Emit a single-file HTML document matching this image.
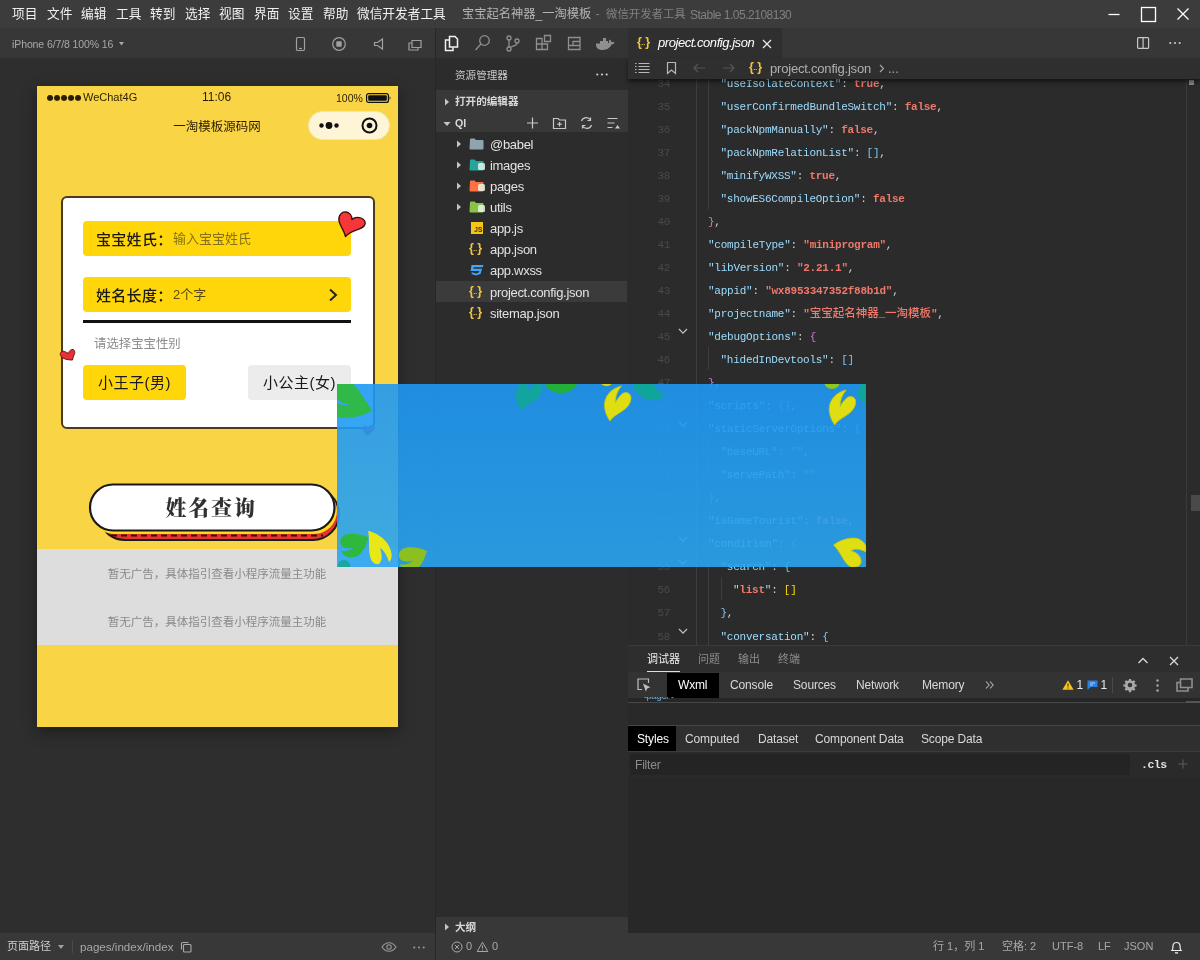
<!DOCTYPE html>
<html lang="zh-CN">
<head>
<meta charset="utf-8">
<title>微信开发者工具</title>
<style>
*{box-sizing:border-box;margin:0;padding:0}
html,body{width:1200px;height:960px;overflow:hidden;background:#2e2e2e}
body{position:relative;font-family:"Liberation Sans","Noto Sans CJK SC",sans-serif;font-size:12px;color:#ccc}
.abs{position:absolute}
.t{position:absolute;white-space:nowrap;line-height:1}
svg{position:absolute;overflow:visible}
/* title bar */
#titlebar{left:0;top:0;width:1200px;height:28px;background:#3c3c3c}
#titlebar .m{color:#f0f0f0;font-size:12.7px;top:8px}
#titlebar .ttl{color:#9d9d9d;font-size:12.5px;top:8px}
/* simulator */
#simbar{left:0;top:28px;width:436px;height:30px;background:#373737}
#sim{left:0;top:58px;width:436px;height:875px;background:#2e2e2e}
#vsplit{left:435px;top:28px;width:1px;height:932px;background:#272727}
/* phone */
#phone{left:37px;top:86px;width:361px;height:641px;background:#f9d444;box-shadow:0 5px 14px rgba(0,0,0,.38);overflow:hidden;color:#000}

/* phone internals (coords relative to phone: x-37, y-86) */
#phone .st{font-size:11px;color:#2a1e00;top:6px}
#capsule{left:271px;top:25px;width:82px;height:29px;border-radius:15px;background:#fdf5d6;border:1px solid #f3e6b0}
#card{left:24px;top:110px;width:314px;height:233px;background:#fff;border:2px solid #4b3a1c;border-radius:6px}
.row{position:absolute;left:46px;width:268px;height:35px;border-radius:4px;background:#ffd60a}
.row .lb{left:13px;top:10.800px;font-size:15px;color:#1a1a1a;font-weight:500;letter-spacing:.3px}
.row .ph{left:90px;top:11px;font-size:13px;color:#86711a}
.gbtn{position:absolute;top:279px;width:103px;height:35px;border-radius:4px;font-size:15px;color:#1a1a1a;text-align:center;line-height:35px;letter-spacing:.5px}
#adbox{left:0;top:463px;width:361px;height:96px;background:#dddddd}
#adbox .t{font-size:11.500px;color:#8a8a8a;left:0;width:360px;text-align:center}
/* explorer */
#actbar{left:436px;top:28px;width:192px;height:30px;background:#343434}
#explorer{left:436px;top:58px;width:192px;height:875px;background:#2c2c2c}
.tree{font-size:13px;color:#e2e2e2;letter-spacing:-.3px;margin-top:1px}
.hdr{font-size:10.600px;font-weight:bold;color:#d8d8d8}
/* editor */
#tabstrip{left:628px;top:28px;width:572px;height:30px;background:#373737}
#tab{left:628px;top:28px;width:154px;height:30px;background:#2f2f2f}
#crumbs{left:628px;top:58px;width:572px;height:21px;background:#2f2f2f;box-shadow:0 3px 4px rgba(0,0,0,.5)}
#editor{left:628px;top:58px;width:572px;height:587px;background:#2b2b2b;overflow:hidden}
.ln{position:absolute;left:0;width:42px;text-align:right;color:#494949;font-family:"Liberation Mono",monospace;font-size:11px;letter-spacing:-.3px;line-height:23px;height:23px}
.cl{position:absolute;white-space:pre;font-family:"Liberation Mono",monospace;font-size:11px;letter-spacing:-.25px;line-height:23px;height:23px;color:#d4d4d4}
.cj{font-family:"Noto Sans CJK SC",sans-serif;font-size:11.500px;letter-spacing:0;font-weight:500;line-height:0}.k{color:#9cdcfe}.s{color:#f0796b;font-weight:bold}.p{color:#d4d4d4}.b1{color:#ffd700}.b2{color:#da70d6}.b3{color:#7cc4f5}
/* debug panel */
#dbg{left:628px;top:645px;width:572px;height:288px;background:#252525}
.dt{font-size:12px;color:#d8d8d8;top:34px;letter-spacing:-.15px}
/* status */
#status .t{font-size:11px;color:#a8a8a8;top:8px}
#status{left:0;top:933px;width:1200px;height:27px;background:#383838}
</style>
</head>
<body><div id="root" style="position:absolute;left:0;top:0;width:1200px;height:960px;will-change:transform">
<div id="titlebar" class="abs"><span class="t m" style="left:12px">项目</span><span class="t m" style="left:47px">文件</span><span class="t m" style="left:81px">编辑</span><span class="t m" style="left:116px">工具</span><span class="t m" style="left:150px">转到</span><span class="t m" style="left:185px">选择</span><span class="t m" style="left:219px">视图</span><span class="t m" style="left:254px">界面</span><span class="t m" style="left:288px">设置</span><span class="t m" style="left:323px">帮助</span><span class="t m" style="left:357px">微信开发者工具</span><span class="t ttl" style="left:462px;font-size:12.25px;color:#b4b4b4" id="tt1">宝宝起名神器_一淘模板</span><span class="t ttl" style="left:595.5px;color:#808080" id="tt2">-</span><span class="t ttl" style="left:606px;color:#808080;font-size:11.4px;top:9px" id="tt3">微信开发者工具</span><span class="t ttl" style="left:690px;color:#808080;font-size:12px;letter-spacing:-.5px;top:8.5px" id="tt4">Stable 1.05.2108130</span><svg style="left:1100px;top:0" width="100" height="28" viewBox="0 0 100 28" fill="none" stroke="#fff" stroke-width="1.3">
<path d="M8.500 14.500h11"/><rect x="41.5" y="7.5" width="14" height="14"/><path d="M77.500 8.500l11 11M88.500 8.500l-11 11"/></svg></div>
<div id="simbar" class="abs"><span class="t" style="left:12px;top:10.800px;font-size:10.500px;letter-spacing:-.1px;color:#a8a8a8">iPhone 6/7/8 100% 16</span>
<svg style="left:118.500px;top:14px" width="5" height="3.500" viewBox="0 0 6 4"><path d="M0 0h6L3 4z" fill="#a8a8a8"/></svg>
<svg style="left:290px;top:7.200px" width="140" height="18" viewBox="0 0 140 18" fill="none" stroke="#a0a0a0" stroke-width="1.2">
<rect x="6.5" y="2.5" width="8" height="13" rx="1.2"/><path d="M9 13.5h3"/>
<circle cx="49" cy="9" r="6.3"/><rect x="46.3" y="6.3" width="5.4" height="5.4" rx="1" fill="#a0a0a0" stroke="none"/>
<path d="M83 7.5h3l5-3.5v10l-5-3.5h-3z" transform="translate(1.5,0)"/>
<path d="M122 5.5h9v7h-9z"/><path d="M122 8h-3v7h9v-2.5"/>
</svg></div>
<div id="sim" class="abs"></div>
<div id="phone" class="abs">
<span class="t st" id="dots" style="left:9.700px;letter-spacing:.05px;font-size:8px;top:7.600px;font-family:'DejaVu Sans',sans-serif">●●●●●</span><span class="t st" style="left:46px">WeChat4G</span>
<span class="t st" style="left:165px;font-size:12px;top:5px">11:06</span>
<span class="t st" style="left:299px;font-size:10.5px;top:7px">100%</span>
<svg style="left:329px;top:7px" width="26" height="10" viewBox="0 0 26 10"><rect x=".6" y=".6" width="21.8" height="8.8" rx="2" fill="none" stroke="#111" stroke-width="1.2"/><rect x="2.2" y="2.2" width="18.6" height="5.6" rx="1" fill="#111"/><path d="M23.6 3.2v3.6c1.2-.3 1.2-3.3 0-3.6z" fill="#111"/></svg>
<span class="t" style="left:0;width:360px;text-align:center;top:35.200px;font-size:12.500px;color:#2a1e00">一淘模板源码网</span>
<div id="capsule" class="abs"><svg style="left:0;top:0" width="80" height="27" viewBox="0 0 80 27"><circle cx="12.500" cy="13.500" r="2.200" fill="#111"/><circle cx="20" cy="13.500" r="3.400" fill="#111"/><circle cx="27.500" cy="13.500" r="2.200" fill="#111"/><circle cx="60.5" cy="13.5" r="7" fill="none" stroke="#111" stroke-width="2"/><circle cx="60.5" cy="13.5" r="2.8" fill="#111"/></svg></div>
<div id="card" class="abs"></div>
<div class="row" style="top:135px"><span class="t lb">宝宝姓氏：</span><span class="t ph">输入宝宝姓氏</span></div>
<div class="row" style="top:191px"><span class="t lb">姓名长度：</span><span class="t ph" style="color:#5a4a10">2个字</span>
<svg style="left:245px;top:11px" width="10" height="14" viewBox="0 0 10 14"><path d="M2 1.5l6 5.5-6 5.5" fill="none" stroke="#222" stroke-width="2"/></svg></div>
<div class="abs" style="left:46px;top:234px;width:268px;height:3px;background:#111"></div>
<span class="t" style="left:57px;top:252px;font-size:12.400px;color:#8c8c8c">请选择宝宝性别</span>
<div class="gbtn" style="left:46px;background:#ffd60a">小王子(男)</div>
<div class="gbtn" style="left:211px;background:#ececec">小公主(女)</div>
<!-- hearts -->
<svg style="left:299px;top:124px" width="32" height="28" viewBox="0 0 32 28"><path d="M9.500 26.500C8 20 4 16 3 11 2 5 6 1.500 10 2 14 2.500 16 6 16 9.500 18 7.500 22 7 25 8 29 9.500 30.500 13 28 16 25 20 15 20 9.500 26.500Z" fill="#f6373a" stroke="#3a0c0c" stroke-width="1.300" stroke-linejoin="round"/></svg>
<svg style="left:22px;top:261px" width="17" height="14" viewBox="0 0 17 14"><path d="M13.500 13C9 13 3 12 1.500 8.500 .500 5.500 3 3.500 5.500 4.500 7 5 8.500 6 9.500 6.500 10 4 12 2 14 2.500 16.500 3.500 16 7 14.500 9 14 10.500 13.800 12 13.500 13Z" fill="#e83038" stroke="#6a1010" stroke-width="1" stroke-linejoin="round"/></svg>
<svg style="left:325px;top:338px" width="13" height="12" viewBox="0 0 13 12"><path d="M6 11.500C3 9 .500 7 1 4 1.500 1.500 4.500 1.500 6 4 7.500 1 11 .500 12 3 12.800 6 9 8.500 6 11.500Z" fill="#e8222e" stroke="#7a1a1a" stroke-width=".8"/></svg>
<!-- big query button -->
<svg style="left:50px;top:396px" width="256" height="62" viewBox="0 0 256 62">
<path d="M30 12H224a26 26 0 0 1 0 52H36a26 26 0 0 1-22-12z" transform="translate(2,-6)" fill="#e5342e" stroke="#1a1a1a" stroke-width="2"/>
<path d="M24 53.500H236" stroke="#3a0a0a" stroke-width="2" stroke-dasharray="6 4" fill="none"/>
<rect x="4" y="6" width="246" height="46" rx="23" fill="#ffd91a"/>
<rect x="3" y="2.500" width="244.500" height="46" rx="23" fill="#fff" stroke="#1a1a1a" stroke-width="2.200"/>
</svg>
<span class="t" style="left:50px;width:248px;text-align:center;top:412px;font-size:21px;font-weight:900;letter-spacing:1.800px;color:#303030;font-family:'Liberation Serif','Noto Serif CJK SC',serif">姓名查询</span>
<div id="adbox" class="abs"><span class="t" style="top:19.500px">暂无广告，具体指引查看小程序流量主功能</span><span class="t" style="top:67.500px">暂无广告，具体指引查看小程序流量主功能</span></div>
</div>
<div id="actbar" class="abs"><svg style="left:0;top:0" width="192" height="30" viewBox="0 0 192 30" fill="none" stroke="#8f8f8f" stroke-width="1.3">
<g stroke="#f2f2f2" stroke-width="1.5"><path d="M13.500 8.500h5.500l2.500 2.500v8h-8z" /><path d="M13 12h-3.500v10.500h7.500v-3"/></g>
<circle cx="48.500" cy="12.500" r="4.800"/><path d="M45 16l-5.500 6"/>
<circle cx="73" cy="10" r="2"/><circle cx="73" cy="21" r="2"/><circle cx="81" cy="13" r="2"/><path d="M73 12v7M81 15c0 3-5 3-7.500 4.500"/>
<path d="M100.500 10.500h5.500v5.500h-5.500zM100.500 16h5.500v5.500h-5.500zM106 16h5.500v5.500h-5.500zM108.500 7.500h6v6h-6z"/>
<path d="M132.500 9.500h11.500v12h-11.500zM144 13.500h-7v4h-4.500M137 17.500h7"/>
<path d="M160 16.500c0 4 3 5.500 6.500 5.500 5 0 8-3 9-5.500 1.500 0 2.500-.8 3-2-1-.7-2.200-.6-3-.2-.2-1.500-1-2.300-1.800-2.800-.9 1-1 2.500-.4 3.500-1 .6-3 .5-13.300.5z" fill="#8f8f8f" stroke="none"/><path d="M164 13h8v3h-8zM167 10h3v3h-3z" fill="#8f8f8f" stroke="none"/>
</svg></div>
<div id="explorer" class="abs"><span class="t" style="left:19px;top:12px;font-size:10.600px;color:#c8c8c8">资源管理器</span>
<svg style="left:160px;top:15px" width="12" height="3" viewBox="0 0 12 3" fill="#d0d0d0"><circle cx="1.300" cy="1.500" r="1.100"/><circle cx="6" cy="1.500" r="1.100"/><circle cx="10.700" cy="1.500" r="1.100"/></svg>
<div class="abs" style="left:0;top:32px;width:192px;height:42px;background:#383838"></div>
<svg style="left:8px;top:40px" width="6" height="8" viewBox="0 0 6 8"><path d="M1 0.500l4 3.500-4 3.500z" fill="#c5c5c5"/></svg>
<span class="t hdr" style="left:19px;top:38px">打开的编辑器</span>
<svg style="left:7px;top:63px" width="8" height="6" viewBox="0 0 8 6"><path d="M0.500 1h7l-3.500 4z" fill="#c5c5c5"/></svg>
<span class="t hdr" style="left:19px;top:60px">QI</span>
<svg style="left:88px;top:57px" width="100" height="16" viewBox="0 0 100 16" fill="none" stroke="#c8c8c8" stroke-width="1.200">
<path d="M8.500 2.500v11M3 8h11"/>
<path d="M29.500 3.500h4.500l1.500 1.500h6v8.500h-12zM35.500 7v4.500M33.200 9.200h4.600"/>
<path d="M57.500 6a5 5 0 0 1 9-1M67.500 10a5 5 0 0 1-9 1M66.500 2.500v3h-3M58.500 13.500v-3h3"/>
<path d="M83.500 3.500h10M83.500 8h7M83.500 12.500h5"/><path d="M91 13.500l2.500-3.500 2.500 3.500z" fill="#c8c8c8" stroke="none"/>
</svg>
<div class="abs" style="left:0;top:223px;width:191px;height:21px;background:#3b3b3b"></div>
<svg style="left:20px;top:82px" width="6" height="8" viewBox="0 0 6 8"><path d="M1 0.500l4 3.500-4 3.500z" fill="#c5c5c5"/></svg><svg style="left:33px;top:80px" width="16" height="12" viewBox="0 0 16 12"><path d="M1 1.500a1 1 0 0 1 1-1h3.500l1.500 1.500h6.500a1 1 0 0 1 1 1v7.500a1 1 0 0 1-1 1h-12a1 1 0 0 1-1-1z" fill="#90a4ae"/></svg><span class="t tree" style="left:54px;top:79px">@babel</span><svg style="left:20px;top:103px" width="6" height="8" viewBox="0 0 6 8"><path d="M1 0.500l4 3.500-4 3.500z" fill="#c5c5c5"/></svg><svg style="left:33px;top:101px" width="16" height="12" viewBox="0 0 16 12"><path d="M1 1.500a1 1 0 0 1 1-1h3.500l1.500 1.500h6.500a1 1 0 0 1 1 1v7.500a1 1 0 0 1-1 1h-12a1 1 0 0 1-1-1z" fill="#26a69a"/></svg><svg style="left:42px;top:105px" width="7" height="7" viewBox="0 0 7 7"><rect width="7" height="7" rx="1.500" fill="#e8f5e9" opacity=".85"/></svg><span class="t tree" style="left:54px;top:100px">images</span><svg style="left:20px;top:124px" width="6" height="8" viewBox="0 0 6 8"><path d="M1 0.500l4 3.500-4 3.500z" fill="#c5c5c5"/></svg><svg style="left:33px;top:122px" width="16" height="12" viewBox="0 0 16 12"><path d="M1 1.500a1 1 0 0 1 1-1h3.500l1.500 1.500h6.500a1 1 0 0 1 1 1v7.500a1 1 0 0 1-1 1h-12a1 1 0 0 1-1-1z" fill="#ff7043"/></svg><svg style="left:42px;top:126px" width="7" height="7" viewBox="0 0 7 7"><rect width="7" height="7" rx="1.500" fill="#e8f5e9" opacity=".85"/></svg><span class="t tree" style="left:54px;top:121px">pages</span><svg style="left:20px;top:145px" width="6" height="8" viewBox="0 0 6 8"><path d="M1 0.500l4 3.500-4 3.500z" fill="#c5c5c5"/></svg><svg style="left:33px;top:143px" width="16" height="12" viewBox="0 0 16 12"><path d="M1 1.500a1 1 0 0 1 1-1h3.500l1.500 1.500h6.500a1 1 0 0 1 1 1v7.500a1 1 0 0 1-1 1h-12a1 1 0 0 1-1-1z" fill="#8bc34a"/></svg><svg style="left:42px;top:147px" width="7" height="7" viewBox="0 0 7 7"><rect width="7" height="7" rx="1.500" fill="#e8f5e9" opacity=".85"/></svg><span class="t tree" style="left:54px;top:142px">utils</span><svg style="left:35px;top:164px" width="12" height="12" viewBox="0 0 12 12"><rect width="12" height="12" fill="#f5c518"/><text x="3.300" y="10.300" font-size="6.500" font-weight="bold" fill="#3a3000" font-family="Liberation Sans,sans-serif">JS</text></svg><span class="t tree" style="left:54px;top:163px">app.js</span><span class="t" style="left:33px;top:184px;font-size:12.5px;color:#f5c542;letter-spacing:-.6px;font-weight:bold">{<span style="font-size:7px;letter-spacing:0;position:relative;top:-1px">..</span>}</span><span class="t tree" style="left:54px;top:184px">app.json</span><svg style="left:34px;top:206px" width="14" height="12" viewBox="0 0 14 12"><path d="M1.500 1h12l-.8 2.200h-9l-.4 1.600h8.800l-1.600 5.200-4.500 1.500-4.500-1.500.3-1.800 4.200 1.300 2.800-1 .6-1.600h-8.800z" fill="#42a5f5"/></svg><span class="t tree" style="left:54px;top:205px">app.wxss</span><span class="t" style="left:33px;top:227px;font-size:12.5px;color:#f5c542;letter-spacing:-.6px;font-weight:bold">{<span style="font-size:7px;letter-spacing:0;position:relative;top:-1px">..</span>}</span><span class="t tree" style="left:54px;top:227px">project.config.json</span><span class="t" style="left:33px;top:248px;font-size:12.5px;color:#f5c542;letter-spacing:-.6px;font-weight:bold">{<span style="font-size:7px;letter-spacing:0;position:relative;top:-1px">..</span>}</span><span class="t tree" style="left:54px;top:248px">sitemap.json</span><div class="abs" style="left:0;top:859px;width:192px;height:16px;background:#383838"></div>
<svg style="left:8px;top:865px" width="6" height="8" viewBox="0 0 6 8"><path d="M1 0.500l4 3.500-4 3.500z" fill="#c5c5c5"/></svg>
<span class="t hdr" style="left:19px;top:863.500px">大纲</span></div>
<div id="tabstrip" class="abs"><svg style="left:508px;top:8px" width="50" height="14" viewBox="0 0 50 14" fill="none" stroke="#c8c8c8" stroke-width="1.200"><rect x="1.600" y="1.600" width="11" height="10.800" rx="1"/><path d="M7.100 1.600v10.800"/><g fill="#c8c8c8" stroke="none"><circle cx="34.300" cy="7" r="1.100"/><circle cx="39" cy="7" r="1.100"/><circle cx="43.700" cy="7" r="1.100"/></g></svg></div>
<div id="editor" class="abs"><div class="abs" style="left:68px;top:20px;width:1px;height:567px;background:#3e3e3e"></div><div class="abs" style="left:80px;top:12.5px;width:1px;height:138px;background:#3e3e3e"></div><div class="abs" style="left:80px;top:288.5px;width:1px;height:23px;background:#3e3e3e"></div><div class="abs" style="left:80px;top:380.5px;width:1px;height:46px;background:#3e3e3e"></div><div class="abs" style="left:80px;top:495.5px;width:1px;height:92px;background:#3e3e3e"></div><div class="abs" style="left:92.5px;top:518.5px;width:1px;height:23px;background:#3e3e3e"></div><div class="ln" style="top:14.56px">34</div><div class="cl" style="left:92.5px;top:14.56px"><span class="k">"useIsolateContext"</span><span class="p">: </span><span class="s">true</span><span class="p">,</span></div><div class="ln" style="top:37.60px">35</div><div class="cl" style="left:92.5px;top:37.60px"><span class="k">"userConfirmedBundleSwitch"</span><span class="p">: </span><span class="s">false</span><span class="p">,</span></div><div class="ln" style="top:60.64px">36</div><div class="cl" style="left:92.5px;top:60.64px"><span class="k">"packNpmManually"</span><span class="p">: </span><span class="s">false</span><span class="p">,</span></div><div class="ln" style="top:83.68px">37</div><div class="cl" style="left:92.5px;top:83.68px"><span class="k">"packNpmRelationList"</span><span class="p">: </span><span class="b3">[]</span><span class="p">,</span></div><div class="ln" style="top:106.72px">38</div><div class="cl" style="left:92.5px;top:106.72px"><span class="k">"minifyWXSS"</span><span class="p">: </span><span class="s">true</span><span class="p">,</span></div><div class="ln" style="top:129.76px">39</div><div class="cl" style="left:92.5px;top:129.76px"><span class="k">"showES6CompileOption"</span><span class="p">: </span><span class="s">false</span></div><div class="ln" style="top:152.80px">40</div><div class="cl" style="left:80px;top:152.80px"><span class="b2">}</span><span class="p">,</span></div><div class="ln" style="top:175.84px">41</div><div class="cl" style="left:80px;top:175.84px"><span class="k">"compileType"</span><span class="p">: </span><span class="s">"miniprogram"</span><span class="p">,</span></div><div class="ln" style="top:198.88px">42</div><div class="cl" style="left:80px;top:198.88px"><span class="k">"libVersion"</span><span class="p">: </span><span class="s">"2.21.1"</span><span class="p">,</span></div><div class="ln" style="top:221.92px">43</div><div class="cl" style="left:80px;top:221.92px"><span class="k">"appid"</span><span class="p">: </span><span class="s">"wx8953347352f88b1d"</span><span class="p">,</span></div><div class="ln" style="top:244.96px">44</div><div class="cl" style="left:80px;top:244.96px"><span class="k">"projectname"</span><span class="p">: </span><span class="s">"<span class="cj">宝宝起名神器</span>_<span class="cj">一淘模板</span>"</span><span class="p">,</span></div><div class="ln" style="top:268.00px">45</div><div class="cl" style="left:80px;top:268.00px"><span class="k">"debugOptions"</span><span class="p">: </span><span class="b2">{</span></div><div class="ln" style="top:291.04px">46</div><div class="cl" style="left:92.5px;top:291.04px"><span class="k">"hidedInDevtools"</span><span class="p">: </span><span class="b3">[]</span></div><div class="ln" style="top:314.08px">47</div><div class="cl" style="left:80px;top:314.08px"><span class="b2">}</span><span class="p">,</span></div><div class="ln" style="top:337.12px">48</div><div class="cl" style="left:80px;top:337.12px"><span class="k">"scripts"</span><span class="p">: </span><span class="b2">{}</span><span class="p">,</span></div><div class="ln" style="top:360.16px">49</div><div class="cl" style="left:80px;top:360.16px"><span class="k">"staticServerOptions"</span><span class="p">: </span><span class="b2">{</span></div><div class="ln" style="top:383.20px">50</div><div class="cl" style="left:92.5px;top:383.20px"><span class="k">"baseURL"</span><span class="p">: </span><span class="s">""</span><span class="p">,</span></div><div class="ln" style="top:406.24px">51</div><div class="cl" style="left:92.5px;top:406.24px"><span class="k">"servePath"</span><span class="p">: </span><span class="s">""</span></div><div class="ln" style="top:429.28px">52</div><div class="cl" style="left:80px;top:429.28px"><span class="b2">}</span><span class="p">,</span></div><div class="ln" style="top:452.32px">53</div><div class="cl" style="left:80px;top:452.32px"><span class="k">"isGameTourist"</span><span class="p">: </span><span class="s">false</span><span class="p">,</span></div><div class="ln" style="top:475.36px">54</div><div class="cl" style="left:80px;top:475.36px"><span class="k">"condition"</span><span class="p">: </span><span class="b2">{</span></div><div class="ln" style="top:498.40px">55</div><div class="cl" style="left:92.5px;top:498.40px"><span class="k">"search"</span><span class="p">: </span><span class="b3">{</span></div><div class="ln" style="top:521.44px">56</div><div class="cl" style="left:105px;top:521.44px"><span class="k">"<span class="s">list</span>"</span><span class="p">: </span><span class="b1">[]</span></div><div class="ln" style="top:544.48px">57</div><div class="cl" style="left:92.5px;top:544.48px"><span class="b3">}</span><span class="p">,</span></div><div class="ln" style="top:567.52px">58</div><div class="cl" style="left:92.5px;top:567.52px"><span class="k">"conversation"</span><span class="p">: </span><span class="b3">{</span></div><svg style="left:50px;top:270.4px" width="10" height="7" viewBox="0 0 10 7"><path d="M1 1l4 4.200 4-4.200" fill="none" stroke="#c0c0c0" stroke-width="1.200"/></svg><svg style="left:50px;top:362.6px" width="10" height="7" viewBox="0 0 10 7"><path d="M1 1l4 4.200 4-4.200" fill="none" stroke="#c0c0c0" stroke-width="1.200"/></svg><svg style="left:50px;top:477.8px" width="10" height="7" viewBox="0 0 10 7"><path d="M1 1l4 4.200 4-4.200" fill="none" stroke="#c0c0c0" stroke-width="1.200"/></svg><svg style="left:50px;top:500.8px" width="10" height="7" viewBox="0 0 10 7"><path d="M1 1l4 4.200 4-4.200" fill="none" stroke="#c0c0c0" stroke-width="1.200"/></svg><svg style="left:50px;top:569.9px" width="10" height="7" viewBox="0 0 10 7"><path d="M1 1l4 4.200 4-4.200" fill="none" stroke="#c0c0c0" stroke-width="1.200"/></svg><div class="abs" style="left:558px;top:20px;width:1px;height:567px;background:#3a3a3a"></div><div class="abs" style="left:561px;top:22px;width:5px;height:5px;background:#8a8a8a"></div><div class="abs" style="left:563px;top:437px;width:9px;height:16px;background:#4a4a4a"></div></div>
<div id="tab" class="abs"><span class="t" style="left:9px;top:8px;font-size:12.5px;color:#f5c542;letter-spacing:-.6px;font-weight:bold">{<span style="font-size:7px;letter-spacing:0;position:relative;top:-1px">..</span>}</span>
<span class="t" style="left:30px;top:8px;font-size:13px;font-style:italic;color:#fff;letter-spacing:-.45px">project.config.json</span>
<svg style="left:134px;top:10.500px" width="10" height="10" viewBox="0 0 10 10"><path d="M1 1l8 8M9 1l-8 8" stroke="#e8e8e8" stroke-width="1.300" fill="none"/></svg></div>
<div id="crumbs" class="abs"><svg style="left:7px;top:3px" width="120" height="14" viewBox="0 0 120 14" fill="none" stroke="#b8b8b8" stroke-width="1.200">
<path d="M0 2.500h1.500M3.500 2.500h11M0 5.500h1.500M3.500 5.500h11M0 8.500h1.500M3.500 8.500h11M0 11.500h1.500M3.500 11.500h11"/>
<path d="M32.500 1.500h8v11l-4-3.500-4 3.500z"/>
<g stroke="#555"><path d="M59 7h11M63 3l-4 4 4 4"/><path d="M88 7h11M95 3l4 4-4 4"/></g></svg>
<span class="t" style="left:121px;top:3px;font-size:12.5px;color:#f5c542;letter-spacing:-.6px;font-weight:bold">{<span style="font-size:7px;letter-spacing:0;position:relative;top:-1px">..</span>}</span>
<span class="t" style="left:142px;top:3.500px;font-size:13px;color:#b0b0b0;letter-spacing:-.2px">project.config.json</span>
<svg style="left:251px;top:6px" width="6" height="9" viewBox="0 0 6 9"><path d="M1 1l3.500 3.500-3.500 3.500" fill="none" stroke="#a8a8a8" stroke-width="1.100"/></svg>
<span class="t" style="left:260px;top:3.500px;font-size:13px;color:#a8a8a8">...</span></div>
<div id="dbg" class="abs"><div class="abs" style="left:0;top:0;width:572px;height:27px;background:#2e2e2e;border-top:1px solid #3a3a3a"></div>
<span class="t" style="left:19px;top:9px;font-size:11px;color:#f0f0f0">调试器</span>
<div class="abs" style="left:19px;top:25.500px;width:33px;height:1px;background:#e0e0e0"></div>
<span class="t" style="left:70px;top:9px;font-size:11px;color:#8c8c8c">问题</span>
<span class="t" style="left:110px;top:9px;font-size:11px;color:#8c8c8c">输出</span>
<span class="t" style="left:150px;top:9px;font-size:11px;color:#8c8c8c">终端</span>
<svg style="left:509px;top:11px" width="46" height="10" viewBox="0 0 46 10" fill="none" stroke="#d8d8d8" stroke-width="1.300"><path d="M1.500 7l4.500-4.500 4.500 4.500"/><path d="M33 1l8 8M41 1l-8 8"/></svg>
<div class="abs" style="left:0;top:27px;width:572px;height:26px;background:#333333"></div>
<svg style="left:9px;top:33px" width="15" height="15" viewBox="0 0 15 15" fill="none" stroke="#bdbdbd" stroke-width="1.200"><path d="M5 11.500h-4v-10.500h10.500v4"/><path d="M6 5.500l2.800 8 1.400-3 3.200-1.300z" fill="#bdbdbd" stroke="none"/></svg>
<div class="abs" style="left:39px;top:27.500px;width:52px;height:25px;background:#000"></div>
<span class="t dt" style="left:50px;color:#fff">Wxml</span>
<span class="t dt" style="left:102px">Console</span>
<span class="t dt" style="left:165px">Sources</span>
<span class="t dt" style="left:228px">Network</span>
<span class="t dt" style="left:294px">Memory</span>
<svg style="left:357px;top:35.500px" width="9" height="8" viewBox="0 0 9 8" fill="none" stroke="#b0b0b0" stroke-width="1.100"><path d="M1 0.500l3.200 3.500-3.200 3.500M5 0.500l3.200 3.500-3.200 3.500"/></svg>
<svg style="left:434px;top:34.500px" width="12" height="10" viewBox="0 0 12 10"><path d="M6 0.300l5.600 9.400h-11.200z" fill="#f5c518"/><path d="M6 3.500v3M6 7.500v1" stroke="#3a3000" stroke-width="1.100"/></svg>
<span class="t dt" style="left:448.500px;color:#e8e8e8">1</span>
<svg style="left:459px;top:35px" width="11" height="10" viewBox="0 0 11 10"><path d="M0.500 0.500h10v6.500h-6.500l-3.500 2.800z" fill="#2f7fe0"/><path d="M3 3h5M3 5h3" stroke="#cfe3ff" stroke-width=".8"/></svg>
<span class="t dt" style="left:472.500px;color:#e8e8e8">1</span>
<div class="abs" style="left:484px;top:32px;width:1px;height:16px;background:#4a4a4a"></div>
<svg style="left:494px;top:32px" width="16" height="16" viewBox="0 0 16 16"><path d="M6.800 0.800h2.400l.4 2 1.300.6 1.700-1.100 1.700 1.700-1.100 1.700.6 1.300 2 .4v2.400l-2 .4-.6 1.300 1.100 1.700-1.700 1.700-1.700-1.100-1.300.6-.4 2h-2.400l-.4-2-1.300-.6-1.700 1.100-1.700-1.700 1.100-1.700-.6-1.300-2-.4v-2.400l2-.4.6-1.300-1.100-1.700 1.700-1.700 1.700 1.100 1.300-.6z" fill="#a8a8a8" transform="translate(1.200,1.200) scale(.85)"/><circle cx="8" cy="8" r="2.300" fill="#333"/></svg>
<svg style="left:527.500px;top:34px" width="3" height="13" viewBox="0 0 3 13" fill="#a8a8a8"><circle cx="1.500" cy="1.500" r="1.200"/><circle cx="1.500" cy="6.500" r="1.200"/><circle cx="1.500" cy="11.500" r="1.200"/></svg>
<svg style="left:548px;top:33px" width="17" height="14" viewBox="0 0 17 14" fill="none" stroke="#8f8f8f" stroke-width="1.600"><path d="M4.500 1h11.500v8.500h-11.500z"/><path d="M4.500 4.500h-3.500v8.500h11v-3"/></svg>
<div class="abs" style="left:0;top:53px;width:572px;height:5px;background:#262626"></div>
<span class="t" style="left:13px;top:46.500px;font-size:10px;letter-spacing:-1px;color:#5fa8d3;font-family:'Liberation Mono',monospace;clip-path:inset(5.500px 0 0 0)">&lt;page/&gt;</span>
<div class="abs" style="left:0;top:57px;width:572px;height:1px;background:#474747"></div>
<div class="abs" style="left:558px;top:56px;width:14px;height:3px;background:#555"></div>
<div class="abs" style="left:0;top:58px;width:572px;height:22px;background:#292929"></div>
<div class="abs" style="left:0;top:80px;width:572px;height:1px;background:#454545"></div>
<div class="abs" style="left:0;top:81px;width:572px;height:25px;background:#2f2f2f"></div>
<div class="abs" style="left:0;top:81px;width:48px;height:25px;background:#000"></div>
<span class="t dt" style="left:9px;top:88px;color:#fff">Styles</span>
<span class="t dt" style="left:57px;top:88px">Computed</span>
<span class="t dt" style="left:130px;top:88px">Dataset</span>
<span class="t dt" style="left:187px;top:88px">Component Data</span>
<span class="t dt" style="left:293px;top:88px">Scope Data</span>
<div class="abs" style="left:0;top:106px;width:572px;height:1px;background:#3c3c3c"></div>
<div class="abs" style="left:0;top:107px;width:572px;height:26px;background:#2a2a2a"></div>
<div class="abs" style="left:2px;top:109px;width:500px;height:21px;background:#242424"></div>
<span class="t" style="left:7px;top:114px;font-size:12px;color:#8c8c8c;letter-spacing:-.2px">Filter</span>
<span class="t" style="left:513px;top:114px;font-size:11.500px;font-weight:bold;color:#e0e0e0;font-family:'Liberation Mono',monospace;letter-spacing:-.5px">.cls</span>
<svg style="left:550px;top:114px" width="10" height="10" viewBox="0 0 10 10"><path d="M5 0.500v9M0.500 5h9" stroke="#5a5a5a" stroke-width="1.100"/></svg>
<div class="abs" style="left:0;top:133px;width:572px;height:155px;background:#282828"></div>
</div>
<div id="status" class="abs"><span class="t" style="left:7px;color:#cfcfcf">页面路径</span>
<svg style="left:58px;top:12px" width="6" height="4" viewBox="0 0 6 4"><path d="M0 0h6l-3 4z" fill="#a0a0a0"/></svg>
<div class="abs" style="left:72px;top:7px;width:1px;height:13px;background:#4a4a4a"></div>
<span class="t" style="left:80px;font-size:11.600px">pages/index/index</span>
<svg style="left:180px;top:8px" width="12" height="12" viewBox="0 0 12 12" fill="none" stroke="#a8a8a8" stroke-width="1.100"><rect x="3.500" y="3.500" width="7.500" height="7.500" rx="1"/><path d="M1.500 8.500v-6a1 1 0 0 1 1-1h6"/></svg>
<svg style="left:381px;top:9px" width="16" height="10" viewBox="0 0 16 10" fill="none" stroke="#9a9a9a" stroke-width="1.100"><path d="M1 5c2-3 4.500-4.300 7-4.300s5 1.300 7 4.300c-2 3-4.500 4.300-7 4.300s-5-1.300-7-4.300z"/><circle cx="8" cy="5" r="2.200"/></svg>
<svg style="left:413px;top:12.500px" width="12" height="3" viewBox="0 0 12 3" fill="#9a9a9a"><circle cx="1.300" cy="1.500" r="1"/><circle cx="6" cy="1.500" r="1"/><circle cx="10.700" cy="1.500" r="1"/></svg>
<svg style="left:451px;top:8px" width="50" height="12" viewBox="0 0 50 12" fill="none" stroke="#a8a8a8" stroke-width="1"><circle cx="6" cy="6" r="5"/><path d="M4 4l4 4M8 4l-4 4"/><path d="M31.500 1.200l5.300 9.300h-10.600z"/><path d="M31.500 4.500v3M31.500 8.500v1"/></svg>
<span class="t" style="left:466px">0</span><span class="t" style="left:492px">0</span>
<span class="t" style="left:933px">行 1，列 1</span>
<span class="t" style="left:1002px">空格: 2</span>
<span class="t" style="left:1052px">UTF-8</span>
<span class="t" style="left:1098px">LF</span>
<span class="t" style="left:1124px">JSON</span>
<svg style="left:1170px;top:7px" width="13" height="14" viewBox="0 0 13 14" fill="none" stroke="#f0f0f0" stroke-width="1.200"><path d="M2 10.500c1-1 1-2 1-4.500a3.500 3.500 0 0 1 7 0c0 2.500 0 3.500 1 4.500z"/><path d="M5.300 12.300a1.300 1.300 0 0 0 2.400 0"/></svg>
</div>
<div id="vsplit" class="abs"></div>
<div id="overlay" class="abs" style="left:337px;top:384px;width:529px;height:183px;overflow:hidden;background:linear-gradient(180deg,rgba(31,152,244,.9),rgba(42,165,240,.9))">
<svg style="left:0;top:0" width="529" height="183" viewBox="0 0 529 183">
<path d="M0 0H16C24 8 30 20 35 26 28 32 10 36 0 33V19C4 21 9 22 12 20.500 8 20 3 18 0 15Z" fill="#30b848"/>
<path d="M17.500 0C8 2 0 10 .500 20 1 27 4 32 6 35 9 30 16 27 21 23 26 19 28 13 26.500 9.500 25 6 20 5.500 17 9 14 12 12 15 11.500 17 11 12 13 5 17.500 0Z" transform="translate(178.500,-8)" fill="#12a5a0"/>
<ellipse cx="224" cy="-3" rx="16.500" ry="12" fill="#22b03a"/>
<ellipse cx="269.500" cy="-2" rx="6" ry="4" fill="#d8d810"/>
<path d="M17.500 0C8 2 0 10 .500 20 1 27 4 32 6 35 9 30 16 27 21 23 26 19 28 13 26.500 9.500 25 6 20 5.500 17 9 14 12 12 15 11.500 17 11 12 13 5 17.500 0Z" transform="translate(267,2)" fill="#dede12" stroke="#c4c80c" stroke-width=".8"/>
<path d="M296 0C298 10 308 18 318 16 323 15 326 13 327 11 322 8 318 3 317 0Z" fill="#10a59a"/>
<ellipse cx="495" cy="-3" rx="8" ry="8" fill="#90c820"/>
<path d="M17.500 0C8 2 0 10 .500 20 1 27 4 32 6 35 9 30 16 27 21 23 26 19 28 13 26.500 9.500 25 6 20 5.500 17 9 14 12 12 15 11.500 17 11 12 13 5 17.500 0Z" transform="translate(491.700,6)" fill="#dede12" stroke="#c4c80c" stroke-width=".8"/>
<path d="M524 0C521 5 520 10 523 15 525 18 527 19 529 19.500V0Z" fill="#10a59a"/>
<path d="M31.500 153.500C24 150 14 148.500 8 151 3 153 2 159 5 162 9 165 15 164.500 18 162.500 14 167 8 168 4 166.500 6 172 12 174.500 18 173 25 171 29 162 31.500 153.500Z" fill="#2eb83c"/>
<path d="M31 147C38 148 48 154 52 162 56 170 55 176 52 178 50 172 47 166 43 164 45 170 46 176 42 180 38 181 34 178 33 172 31 164 33 155 31 147Z" fill="#e8e818"/>
<path d="M31.500 153.500C24 150 14 148.500 8 151 3 153 2 159 5 162 9 165 15 164.500 18 162.500 14 167 8 168 4 166.500 6 172 12 174.500 18 173 25 171 29 162 31.500 153.500Z" transform="translate(58.500,13.500)" fill="#8cc020"/>
<ellipse cx="7" cy="183" rx="6.500" ry="7" fill="#18a8a0"/>
<path d="M496.500 161C505 155 515 152.500 522 155 526 157 528 160 529 162V168C524 165 517 164 514 167 520 168 525 173 524 179 523 182 520 183 518 183H514C507 180 504 168 496.500 161Z" fill="#dede12" stroke="#c4c80c" stroke-width=".8"/>
</svg></div>
</div></body>
</html>
